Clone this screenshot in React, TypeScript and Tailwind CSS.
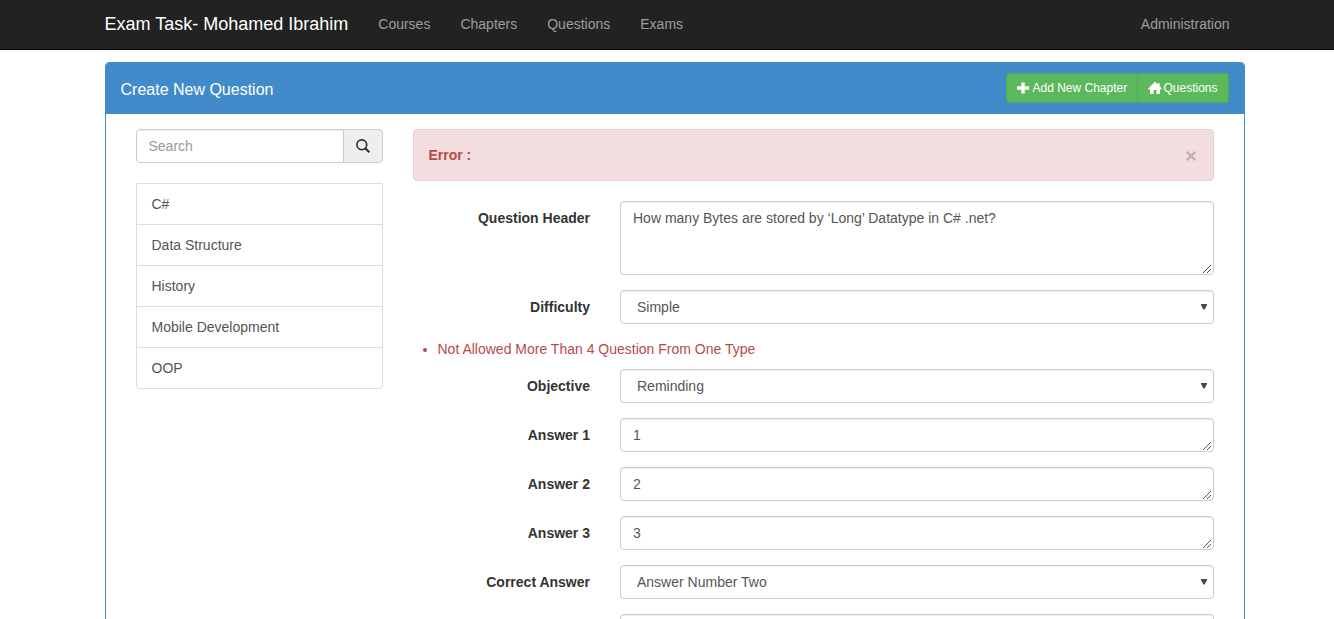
import React from "react";

const navLinks = ["Courses", "Chapters", "Questions", "Exams"];
const courses = ["C#", "Data Structure", "History", "Mobile Development", "OOP"];

const control =
  "block w-full rounded-[4px] border border-[#ccc] bg-white text-[14px] leading-5 text-[#555] shadow-[inset_0_1px_1px_rgba(0,0,0,0.075)] outline-none";

function Row({ label, children }: { label: string; children?: React.ReactNode }) {
  return (
    <div className="mb-[15px] flex gap-[30px]">
      <label className="w-[177px] shrink-0 pt-[7px] text-right font-bold">{label}</label>
      <div className="relative min-w-0 flex-1">{children}</div>
    </div>
  );
}

function Area({ value, tall }: { value: string; tall?: boolean }) {
  return (
    <>
      <textarea
        defaultValue={value}
        spellCheck={false}
        className={`${control} resize-none overflow-hidden px-3 py-1.5 ${tall ? "h-[74px]" : "h-[34px]"}`}
      />
      <svg
        className="pointer-events-none absolute right-[3px] bottom-[2px]"
        width="8"
        height="8"
        viewBox="0 0 8 8"
        fill="#555"
        shapeRendering="crispEdges"
      >
        {[0, 1, 2, 3, 4, 5, 6, 7].map((i) => (
          <rect key={i} x={i} y={7 - i} width="1" height="1" />
        ))}
        {[4, 5, 6, 7].map((i) => (
          <rect key={`s${i}`} x={i} y={11 - i} width="1" height="1" />
        ))}
      </svg>
    </>
  );
}

function Select({ value }: { value: string }) {
  return (
    <>
      <select className={`${control} h-[34px] appearance-none px-4 py-1.5`} defaultValue={value}>
        <option>{value}</option>
      </select>
      <svg
        className="pointer-events-none absolute top-[14px] right-[7px]"
        width="6"
        height="6"
        viewBox="0 0 6 6"
        fill="#484848"
      >
        <path d="M0 0H6V1L3.6 5.6H2.4L0 1Z" />
      </svg>
    </>
  );
}

export default function App() {
  return (
    <div className="h-screen overflow-hidden bg-white font-['Liberation_Sans',Arial,sans-serif] text-[14px] leading-5 text-[#333]">
      <nav className="h-[50px] border-b border-[#080808] bg-[#222]">
        <div className="ml-[104.5px] flex w-[1140px] items-center pt-[14px] text-[#9d9d9d]">
          <a className="mr-[30px] text-[18px] leading-5 text-white">Exam Task- Mohamed Ibrahim</a>
          <div className="flex gap-[30px]">
            {navLinks.map((l) => (
              <a key={l}>{l}</a>
            ))}
          </div>
          <a className="mr-[15px] ml-auto">Administration</a>
        </div>
      </nav>

      <main className="mt-[12px] ml-[105px] w-[1140px] rounded-[4px] border border-[#428bca] bg-white">
        <header className="flex h-[51px] items-start justify-between rounded-t-[3px] bg-[#428bca] pr-[15px] pl-[14.5px] pt-[10px] text-white">
          <h3 className="pt-[7px] text-[16px] leading-5">Create New Question</h3>
          <div className="flex text-[12px] leading-[18px]">
            <button className="flex h-[30px] w-[132px] items-center rounded-l-[3px] border border-[#4cae4c] bg-[#5cb85c] pl-[10px] whitespace-nowrap">
              <svg className="mr-[3.5px] shrink-0" width="12" height="12" viewBox="0 0 12 12" fill="currentColor">
                <path d="M4.3 0.5H7.7V4.3H12V7.7H7.7V11.5H4.3V7.7H0V4.3H4.3Z" />
              </svg>
              Add New Chapter
            </button>
            <button className="-ml-px flex h-[30px] w-[92px] items-center rounded-r-[3px] border border-[#4cae4c] bg-[#5cb85c] pl-[10px] whitespace-nowrap">
              <svg className="mr-[1.5px] shrink-0" width="14" height="12" viewBox="0 0 14 12" fill="currentColor">
                <path d="M6.6 0H7.4L10 2.6V1H11.6V4.2L14 6.7V7.2H12V12H8.4V8H5.6V12H2V7.2H0V6.7Z" />
              </svg>
              Questions
            </button>
          </div>
        </header>

        <div className="flex gap-[30px] px-[30px] pt-[15px]">
          <aside className="w-[247px] shrink-0">
            <div className="mb-5 flex h-[34px]">
              <input
                placeholder="Search"
                className="h-[34px] w-[208px] rounded-l-[4px] border border-[#ccc] py-1.5 pr-3 pl-[11.5px] text-[#555] shadow-[inset_0_1px_1px_rgba(0,0,0,0.075)] outline-none placeholder:text-[#999]"
              />
              <button className="-ml-px flex w-[40px] items-center justify-center rounded-r-[4px] border border-[#ccc] bg-[#eee]">
                <svg width="14" height="14" viewBox="0 0 14 14" fill="none" stroke="#2b2b2b">
                  <circle cx="5.8" cy="5.8" r="4.9" strokeWidth="1.6" />
                  <path d="M9.2 9.2L13.3 13.3" strokeWidth="2.1" />
                </svg>
              </button>
            </div>
            <ul className="divide-y divide-[#ddd] rounded-b-[4px] border border-[#ddd] text-[#555]">
              {courses.map((c) => (
                <li key={c} className="px-[14.5px] py-[10px]">
                  {c}
                </li>
              ))}
            </ul>
          </aside>

          <section className="w-[801px] shrink-0">
            <div className="mb-5 flex h-[52px] items-center justify-between rounded-[4px] border border-[#ebccd1] bg-[#f2dede] pr-[15px] pl-[14.5px] text-[#b94a48]">
              <strong>Error :</strong>
              <button aria-label="Close" className="mr-[2px] pt-[1px]">
                <svg width="10" height="10" viewBox="0 0 10 10" stroke="#c2b2b2" strokeWidth="2.4">
                  <path d="M0.8 0.8L9.2 9.2M9.2 0.8L0.8 9.2" />
                </svg>
              </button>
            </div>

            <Row label="Question Header">
              <Area value="How many Bytes are stored by ‘Long’ Datatype in C# .net?" tall />
            </Row>
            <Row label="Difficulty">
              <Select value="Simple" />
            </Row>
            <ul className="mb-[10px] flex items-center text-[#b94a48]">
              <li className="flex items-center gap-[10.5px] pl-[10px]">
                <span className="mt-[2px] size-[4px] rounded-full bg-[#b94a48]" />
                Not Allowed More Than 4 Question From One Type
              </li>
            </ul>
            <Row label="Objective">
              <Select value="Reminding" />
            </Row>
            <Row label="Answer 1">
              <Area value="1" />
            </Row>
            <Row label="Answer 2">
              <Area value="2" />
            </Row>
            <Row label="Answer 3">
              <Area value="3" />
            </Row>
            <Row label="Correct Answer">
              <Select value="Answer Number Two" />
            </Row>
            <Row label="">
              <Area value="" />
            </Row>
          </section>
        </div>
      </main>
    </div>
  );
}
